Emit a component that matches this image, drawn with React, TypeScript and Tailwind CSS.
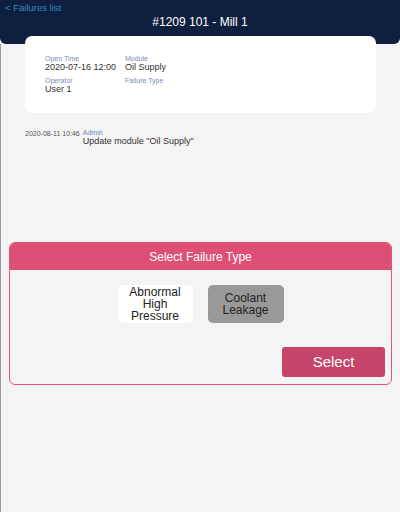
export default function App() {
  return (
    <div className="relative flex h-[512px] w-[400px] flex-col overflow-hidden bg-[#f4f4f4] font-['Liberation_Sans',Arial,sans-serif]">
      <header className="h-[44px] rounded-b-[6px] bg-[#0f1f40] px-[5px] pt-[2px]">
        <div className="text-[9.5px] leading-[11px] text-[#3d86c6]">&lt; Failures list</div>
        <h1 className="mt-[2px] text-center text-[12px] leading-[14px] text-white">#1209 101 - Mill 1</h1>
      </header>

      <main className="flex flex-1 flex-col border-l border-[#9a9a9a]">
        <section className="mx-[24px] -mt-[8px] h-[77px] rounded-[7px] bg-white pl-[20px] pt-[19px]">
          <div className="grid w-[160px] grid-cols-[80px_1fr] gap-y-[5px]">
            <div>
              <div className="text-[7px] leading-[7px] text-[#7a8db0]">Open Time</div>
              <div className="text-[9px] leading-[10px] text-[#333]">2020-07-16 12:00</div>
            </div>
            <div>
              <div className="text-[7px] leading-[7px] text-[#7a8db0]">Module</div>
              <div className="text-[9px] leading-[10px] text-[#333]">Oil Supply</div>
            </div>
            <div>
              <div className="text-[7px] leading-[7px] text-[#7a8db0]">Operator</div>
              <div className="text-[9px] leading-[10px] text-[#333]">User 1</div>
            </div>
            <div>
              <div className="text-[7px] leading-[7px] text-[#7a8db0]">Failure Type</div>
            </div>
          </div>
        </section>

        <div className="ml-[24px] mt-[16px] flex gap-[3px]">
          <div className="pt-[1px] text-[7px] leading-[8px] text-[#555]">2020-08-11 10:46</div>
          <div>
            <div className="text-[7px] leading-[7px] text-[#6f86b8]">Admin</div>
            <div className="text-[9px] leading-[10px] text-[#333]">Update module "Oil Supply"</div>
          </div>
        </div>

        <section className="mx-[8px] mt-[96px] flex h-[143px] flex-col overflow-hidden rounded-[6px] border border-[#e0567c] bg-[#f4f4f4]">
          <div className="flex h-[27px] items-center justify-center bg-[#dd4f75] text-[12px] text-white">Select Failure Type</div>
          <div className="mt-[15px] flex justify-center gap-[15px]">
            <button className="flex h-[38px] w-[75px] items-center justify-center rounded-[5px] bg-white text-[12px] leading-[12px] text-[#222]">
              Abnormal<br />High<br />Pressure
            </button>
            <button className="flex h-[38px] w-[76px] items-center justify-center rounded-[5px] bg-[#999] text-[12px] leading-[12px] text-[#222]">
              Coolant<br />Leakage
            </button>
          </div>
          <div className="mt-[24px] flex justify-end pr-[6px]">
            <button className="h-[30px] w-[103px] rounded-[3px] bg-[#c5466a] text-[15px] text-white">Select</button>
          </div>
        </section>
      </main>
    </div>
  );
}
